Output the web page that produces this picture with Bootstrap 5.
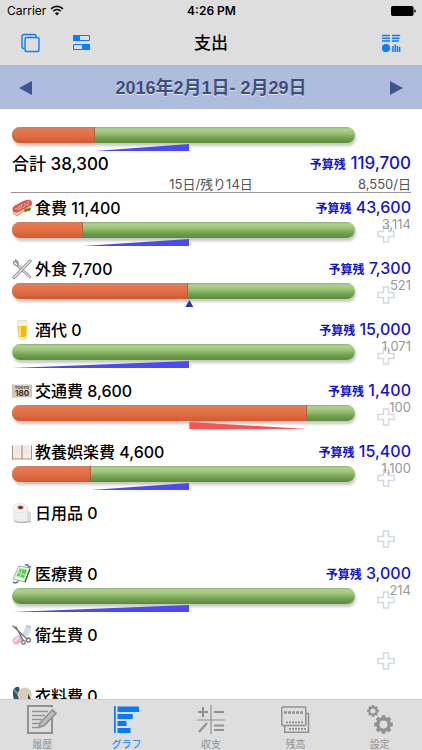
<!DOCTYPE html>
<html lang="ja">
<head>
<meta charset="utf-8">
<meta name="viewport" content="width=device-width, initial-scale=1">
<title>支出</title>
<link rel="stylesheet" href="https://cdn.jsdelivr.net/npm/bootstrap@5.3.0/dist/css/bootstrap.min.css">
<style>
  body { font-family: Inter, "Noto Sans CJK JP", sans-serif; color: #000; background: #fff; line-height: 20px; }
  svg { display: block; }
  .app-head { background: #dedede; border-bottom: 1px solid #b4b8c2; }
  .status-bar { height: 21px; font-size: 12px; padding: 0 6px 0 7px; }
  .title-bar { height: 44px; padding: 0 20px; }
  .title-bar h1 { font-size: 17px; line-height: 20px; }
  .side-tools { flex: 1 1 0; }
  .icon-button { border: 0; padding: 0; background: none; color: #0a7cff; }
  .period-bar { height: 43px; background: #aebcdd; color: #3d4f7b; padding: 0 18px; }
  .period-bar h2 { font: bold 18px/24px "Liberation Sans", "Noto Sans CJK JP", sans-serif; text-shadow: 0 1px 0 #dfe6f5; }
  .period-bar .icon-button { color: #3f5590; }
  .report { padding: 18px 11px 0 12px; scrollbar-width: none; }
  .report::-webkit-scrollbar { display: none; }
  .meter-column { flex: 1 1 0; min-width: 0; }
  .side-column { width: 56px; flex: none; }
  .track { height: 16px; border-radius: 8px; overflow: hidden; background: linear-gradient(#8fae78 0, #afd38d 2px, #9bc479 6px, #74a051 11px, #5d893b 16px); box-shadow: 1px 3px 3px rgba(0,0,0,.22); }
  .track-spent { width: var(--spent); height: 16px; background: linear-gradient(#c9815f 0, #e9794e 2px, #e27046 8px, #d05a32 16px); border-right: 1px solid #a5683a; }
  .drift { height: 7px; margin-top: 1px; position: relative; }
  .under { margin-left: var(--spent); width: calc(51.7% - var(--spent)); background: #4b4bf5; clip-path: polygon(0 100%, 100% 0, 100% 100%); }
  .over { margin-left: 51.7%; width: calc(var(--spent) - 51.7%); background: #fb5252; clip-path: polygon(0 0, 100% 100%, 0 100%); }
  .on-pace { margin-left: calc(51.7% - 4px); width: 8px; background: #2e2eb8; clip-path: polygon(50% 0, 100% 100%, 0 100%); }
  .entry { height: 61px; }
  .entry-head { height: 29px; font-size: 16px; font-weight: 500; }
  .entry-name { margin-left: 3px; }
  .left-over { color: #1414cf; }
  .left-over small { font-size: 12px; font-weight: 700; }
  .total-head { height: 26px; font-size: 17px; font-weight: 500; }
  .pace-line { height: 16px; line-height: 14px; font-size: 13px; color: #555; border-bottom: 1px solid #999; margin-left: -1px; }
  .per-day { font-size: 13px; line-height: 14px; height: 5px; margin-top: -5px; color: #999; margin-bottom: 3px; position: relative; z-index: 1; }
  .add-button { margin-left: 22px; display: block; color: #d3d9e4; }
  .tab-bar { height: 51px; background: #dedede; border-top: 1px solid #cfcfcf; font-size: 10px; line-height: 12px; }
  .tab-item { color: #929292; text-decoration: none; padding-top: 4px; gap: 2px; }
  .tab-item.active { color: #087aff; }
</style>
<script src="https://cdn.jsdelivr.net/npm/bootstrap@5.3.0/dist/js/bootstrap.bundle.min.js"></script>
</head>
<body>
<svg width="0" height="0" class="position-absolute" aria-hidden="true">
  <symbol id="plus" viewBox="0 0 18 18"><path d="M6.500 1h5v5.500H17v5h-5.500V17h-5v-5.500H1v-5h5.500z" fill="#fff" stroke="currentColor" stroke-width="1.500"/></symbol>
  <symbol id="gear" viewBox="-10 -10 20 20"><circle r="6" fill="none" stroke="currentColor" stroke-width="3.600"/><g stroke="currentColor" stroke-width="4"><path d="M0-9.800V-6M0 9.800V6M-9.800 0H-6M9.800 0H6M-6.900-6.900l2.600 2.600M6.900 6.900 4.300 4.300M-6.900 6.900l2.600-2.600M6.900-6.900 4.300-4.300"/></g></symbol>
</svg>
<div class="d-flex flex-column vh-100">
  <header class="app-head">
    <div class="status-bar d-flex align-items-center">
      <div class="side-tools d-flex align-items-center gap-1"><span>Carrier</span>
        <svg width="14" height="11" viewBox="0 0 14 11" fill="none" stroke="#111" stroke-width="1.700"><path d="M1 3.800a8.600 8.600 0 0 1 12 0M3.200 6.100a5.500 5.500 0 0 1 7.600 0"/><path d="M7 10.500 4.900 8.300a3 3 0 0 1 4.200 0z" fill="#111" stroke="none"/></svg>
      </div>
      <span class="fw-semibold">4:26 PM</span>
      <div class="side-tools d-flex justify-content-end">
        <svg width="25" height="10" viewBox="0 0 25 10"><rect width="22.500" height="10" rx="1.800"/><path d="M23.300 3.200q1.500.4 1.500 1.800t-1.500 1.800z"/></svg>
      </div>
    </div>
    <div class="title-bar d-flex align-items-center">
      <div class="side-tools d-flex align-items-center">
        <button class="icon-button" aria-label="コピー"><svg width="20" height="20" viewBox="0 0 20 20" fill="none" stroke="currentColor" stroke-width="1.400"><path d="M4.500 15.500H4a2 2 0 0 1-2-2V3.500a2 2 0 0 1 2-2h10a2 2 0 0 1 2 2V4"/><rect x="5" y="4.500" width="14" height="14" rx="1.800"/></svg></button>
        <button class="icon-button ms-4" aria-label="表示切替"><svg class="ms-2" width="18" height="18" viewBox="0 0 18 18" fill="none" stroke="currentColor"><path d="M1.500 1.500h16v5h-16zM1.500 10.500h16v5h-16z"/><path fill="currentColor" d="M1.500 1.500h6v5h-6zM10.500 10.500h7v5h-7z"/></svg></button>
      </div>
      <h1 class="m-0 fw-medium">支出</h1>
      <div class="side-tools d-flex justify-content-end">
        <button class="icon-button" aria-label="レポート"><svg width="20" height="20" viewBox="0 0 20 20" stroke="currentColor" stroke-width="1.500"><path d="M0 2.500h8M0 5.300h8M0 8.100h8M10 2.500h8.200M10 5.300h7.500M10 8.100h6.700"/><circle cx="4" cy="15" r="4.100" fill="currentColor" stroke="none"/><path d="M11 19v-6M13.300 19V11.500M15.500 19V13M17.600 19v-5.300"/></svg></button>
      </div>
    </div>
  </header>
  <div class="period-bar d-flex align-items-center justify-content-between flex-shrink-0">
    <button class="icon-button" aria-label="前の月"><svg width="14" height="14" viewBox="0 0 14 14"><path d="M1 7 14 0v14z" fill="currentColor"/></svg></button>
    <h2 class="m-0">2016年2月1日- 2月29日</h2>
    <button class="icon-button" aria-label="次の月"><svg width="14" height="14" viewBox="0 0 14 14"><path d="M13 7 0 0v14z" fill="currentColor"/></svg></button>
  </div>

  <main class="report flex-grow-1 overflow-auto">
    <section>
      <div class="d-flex" style="--spent:24.2%">
        <div class="meter-column"><div class="track"><div class="track-spent"></div></div><div class="drift under"></div></div>
        <div class="side-column"></div>
      </div>
      <div class="total-head d-flex align-items-center justify-content-between"><span>合計 38,300</span><span class="left-over"><small>予算残</small> 119,700</span></div>
      <div class="pace-line d-flex"><span class="side-tools"></span><span>15日/残り14日</span><span class="side-tools text-end">8,550/日</span></div>
    </section>

    <section class="entry" style="--spent:20.7%">
      <div class="entry-head d-flex align-items-center">
        <svg width="20" height="20" viewBox="0 0 20 20"><path d="m0 14 5 4 15-9V5L2 12z" fill="#e9d3a3"/><path d="M1 13Q0 8 5 7 12 2 17 2q4 1 2 5-3 2-8 4-6 5-10 2z" fill="#e2574b" stroke="#c24a3d" stroke-width=".6"/><path d="M3 11q4 0 5-4M6 12q4-1 4-6M11 10q3-2 2-5M15 8q2-2 1-5" stroke="#ffb5a0" fill="none"/><path d="M12 12q1-3 3-1 3-3 4 0-1 3-4 2-2 3-3-1z" fill="#4f8b35"/><path d="m1 15 4 3 7-5" stroke="#c89b58" fill="none"/></svg>
        <span class="entry-name">食費 11,400</span><span class="left-over ms-auto"><small>予算残</small> 43,600</span>
      </div>
      <div class="d-flex">
        <div class="meter-column"><div class="track"><div class="track-spent"></div></div><div class="drift under"></div></div>
        <div class="side-column"><div class="per-day text-end">3,114</div><button class="icon-button add-button" aria-label="食費を追加"><svg width="18" height="18"><use href="#plus"/></svg></button></div>
      </div>
    </section>

    <section class="entry" style="--spent:51.3%">
      <div class="entry-head d-flex align-items-center">
        <svg width="20" height="20" viewBox="0 0 20 20" fill="none" stroke-linecap="round"><path d="M6 7 18 18" stroke="#888" stroke-width="2.400"/><path d="M6 7 18 18" stroke="#ddd" stroke-width="1.200"/><path d="M1.500 2.500Q2 7 6 7 7 3 3.500 1M3 2l3 3" stroke="#999" stroke-width="1.500"/><path d="M2 18.500 18 2" stroke="#777" stroke-width="3"/><path d="M2 18.500 18 2" stroke="#e5e5e5" stroke-width="1.700"/></svg>
        <span class="entry-name">外食 7,700</span><span class="left-over ms-auto"><small>予算残</small> 7,300</span>
      </div>
      <div class="d-flex">
        <div class="meter-column"><div class="track"><div class="track-spent"></div></div><div class="drift on-pace"></div></div>
        <div class="side-column"><div class="per-day text-end">521</div><button class="icon-button add-button" aria-label="外食を追加"><svg width="18" height="18"><use href="#plus"/></svg></button></div>
      </div>
    </section>

    <section class="entry" style="--spent:0%">
      <div class="entry-head d-flex align-items-center">
        <svg width="20" height="20" viewBox="0 0 20 20"><path d="M5.500.5h9.500l-1 18q-3.800 2-7.500 0z" fill="#f3f0e4" stroke="#d8d2be" stroke-width=".7"/><path d="M6 5.500h8.700L14 16.500q-3.500 1.500-7 0z" fill="#f9b806"/><path d="M8 6.500v9.500" stroke="#ffe36a" stroke-width="2"/><path d="M6 3.500h8.800v2.500H6z" fill="#fff7cf"/></svg>
        <span class="entry-name">酒代 0</span><span class="left-over ms-auto"><small>予算残</small> 15,000</span>
      </div>
      <div class="d-flex">
        <div class="meter-column"><div class="track"></div><div class="drift under"></div></div>
        <div class="side-column"><div class="per-day text-end">1,071</div><button class="icon-button add-button" aria-label="酒代を追加"><svg width="18" height="18"><use href="#plus"/></svg></button></div>
      </div>
    </section>

    <section class="entry" style="--spent:86%">
      <div class="entry-head d-flex align-items-center">
        <svg width="20" height="20" viewBox="0 0 20 20"><rect y="4" width="20" height="12" fill="#d6c9ba" stroke="#b9aa99" stroke-width=".6"/><text x="10" y="8" font-size="4" font-weight="700" text-anchor="middle" fill="#4b443d">TOKYO</text><text x="10" y="15" font-size="8" font-weight="700" text-anchor="middle" fill="#39332e">180</text></svg>
        <span class="entry-name">交通費 8,600</span><span class="left-over ms-auto"><small>予算残</small> 1,400</span>
      </div>
      <div class="d-flex">
        <div class="meter-column"><div class="track"><div class="track-spent"></div></div><div class="drift over"></div></div>
        <div class="side-column"><div class="per-day text-end">100</div><button class="icon-button add-button" aria-label="交通費を追加"><svg width="18" height="18"><use href="#plus"/></svg></button></div>
      </div>
    </section>

    <section class="entry" style="--spent:23%">
      <div class="entry-head d-flex align-items-center">
        <svg width="20" height="20" viewBox="0 0 20 20"><path d="M0 3.500h20v14H0z" fill="#a98f80"/><path d="M1 3h8.500v13.500H1zM10.500 3H19v13.500h-8.500z" fill="#f4ebe4"/><path d="M10 3v14" stroke="#bfa797"/><path d="M3 6h5M3 8.500h5M3 11h5M12 6h5M12 8.500h5M12 11h5" stroke="#e4d9d0" stroke-width=".7"/></svg>
        <span class="entry-name">教養娯楽費 4,600</span><span class="left-over ms-auto"><small>予算残</small> 15,400</span>
      </div>
      <div class="d-flex">
        <div class="meter-column"><div class="track"><div class="track-spent"></div></div><div class="drift under"></div></div>
        <div class="side-column"><div class="per-day text-end">1,100</div><button class="icon-button add-button" aria-label="教養娯楽費を追加"><svg width="18" height="18"><use href="#plus"/></svg></button></div>
      </div>
    </section>

    <section class="entry">
      <div class="entry-head d-flex align-items-center">
        <svg width="20" height="20" viewBox="0 0 20 20"><path d="M1 5v11q1 4 8 4l10-1.500V9l-3-1V4z" fill="#d9dadc"/><path d="M1 5v10q0 3 6 3.500l8-1V5z" fill="#eeeff0"/><ellipse cx="8.500" cy="5" rx="7.500" ry="4.500" fill="#f7f7f7" stroke="#d3d3d3" stroke-width=".5"/><ellipse cx="8.500" cy="4.500" rx="3" ry="1.900" fill="#9a6238"/><ellipse cx="8.500" cy="4.500" rx="1.500" ry="1" fill="#4d2f1b"/><path d="M2 18q7 3 17 .5" fill="none" stroke="#aaa"/></svg>
        <span class="entry-name">日用品 0</span>
      </div>
      <div class="d-flex justify-content-end"><div class="side-column"><div class="per-day"></div><button class="icon-button add-button" aria-label="日用品を追加"><svg width="18" height="18"><use href="#plus"/></svg></button></div></div>
    </section>

    <section class="entry" style="--spent:0%">
      <div class="entry-head d-flex align-items-center">
        <svg width="20" height="20" viewBox="0 0 20 20"><path d="m7 2 11 2-5 14-12-3z" fill="#eaf6e2" stroke="#8a9a84" stroke-width=".8"/><path d="m8 4.500 7 1.500-3 8-7.500-2z" fill="#57c951"/><path d="m6 8 7 3M10 5 8 13" stroke="#99ee8c" stroke-width="1.500"/><path d="m13 18 5-13" stroke="#445940" stroke-width="1.300"/><path d="M1 18q4 2 5-1M13 1q3-1 4 2l2 0" fill="none" stroke="#4e8790" stroke-width="1.700"/></svg>
        <span class="entry-name">医療費 0</span><span class="left-over ms-auto"><small>予算残</small> 3,000</span>
      </div>
      <div class="d-flex">
        <div class="meter-column"><div class="track"></div><div class="drift under"></div></div>
        <div class="side-column"><div class="per-day text-end">214</div><button class="icon-button add-button" aria-label="医療費を追加"><svg width="18" height="18"><use href="#plus"/></svg></button></div>
      </div>
    </section>

    <section class="entry">
      <div class="entry-head d-flex align-items-center">
        <svg width="20" height="20" viewBox="0 0 20 20" stroke-linecap="round"><path d="M16 4 14 8" stroke="#d3dcea" stroke-width="6"/><path d="m15 1 3 1" stroke="#b9c5d6" stroke-width="2"/><path d="m4 16 3-2" stroke="#e5aecb" stroke-width="7"/><path d="m3 16 3-3" stroke="#f9d7e7" stroke-width="3"/><path d="m1 1 14 13M4 2l7 13" stroke="#777" stroke-width="1.500"/><g fill="none" stroke="#77727a" stroke-width="1.300"><circle cx="16.500" cy="15" r="2"/><circle cx="11.500" cy="17.500" r="1.800"/></g></svg>
        <span class="entry-name">衛生費 0</span>
      </div>
      <div class="d-flex justify-content-end"><div class="side-column"><div class="per-day"></div><button class="icon-button add-button" aria-label="衛生費を追加"><svg width="18" height="18"><use href="#plus"/></svg></button></div></div>
    </section>

    <section class="entry">
      <div class="entry-head d-flex align-items-center">
        <svg width="20" height="20" viewBox="0 0 20 20"><path d="M1 5q2-5 6-4l2 8-3 9q-6-4-5-13z" fill="#315562"/><path d="M8 3q7-4 11 2l1 5-3 2-1 7H9L5 8z" fill="#d8cdb7"/><path d="m16 8 3 5-3 1" fill="#443b35"/><path d="m2 4 4 4" stroke="#7da5ad" stroke-width="1.500"/></svg>
        <span class="entry-name">衣料費 0</span>
      </div>
      <div class="d-flex justify-content-end"><div class="side-column"><div class="per-day"></div><button class="icon-button add-button" aria-label="衣料費を追加"><svg width="18" height="18"><use href="#plus"/></svg></button></div></div>
    </section>
  </main>

  <nav class="tab-bar nav nav-fill flex-nowrap flex-shrink-0" aria-label="メイン">
    <a href="#history" class="tab-item col d-flex flex-column align-items-center"><svg width="32" height="32" viewBox="0 0 32 32" fill="none" stroke="currentColor"><path d="M26 3.200V2H2v27h24V14" stroke-width="2"/><path d="M6 7.500h16M6 11.500h13M6 15.500h10M6 19.500h8M6 23.500h6" stroke-width="1.300"/><path d="m14.500 18.500 12-12.500 3.500 3.200-12 12.500-5 1.600z" fill="#bdbdbd" stroke-width="1.700"/></svg>履歴</a>
    <a href="#graph" class="tab-item active col d-flex flex-column align-items-center" aria-current="page"><svg width="28" height="32" viewBox="0 0 28 32" fill="currentColor"><path d="M1 2h1.700v27H1zM4.500 2.500H26v5.500H4.500zM4.500 10h15.200v5H4.500zM4.500 17h9v5h-9zM4.500 24h13v5h-13z"/></svg>グラフ</a>
    <a href="#balance" class="tab-item col d-flex flex-column align-items-center"><svg width="30" height="32" viewBox="0 0 30 32" fill="none" stroke="currentColor" stroke-width="2.200"><path d="M15 1v29M1 16h28" stroke-width="1.200"/><path d="M2 8h10M7 3v10M18 8h10M3 28l8-9M18 21.500h10M18 26h10"/></svg>収支</a>
    <a href="#remaining" class="tab-item col d-flex flex-column align-items-center"><svg width="30" height="32" viewBox="0 0 30 32" fill="none" stroke="currentColor" stroke-width="1.500"><rect x="1.800" y="3" width="24" height="18.500" rx="1"/><path d="M26 9.500h2.500v18.700H4.800V22"/><path d="M4 8.500h20" stroke-width="2.500" stroke-dasharray="3 1"/><path d="M6 18.300h18M9 24.800h17" stroke-width="1.800" stroke-dasharray="2 1"/></svg>残高</a>
    <a href="#settings" class="tab-item col d-flex flex-column align-items-center"><svg width="28" height="32" viewBox="0 0 28 32"><use href="#gear" x="1" y="1" width="12" height="12"/><use href="#gear" x="8" y="11" width="19" height="19"/></svg>設定</a>
  </nav>
</div>
</body>
</html>
